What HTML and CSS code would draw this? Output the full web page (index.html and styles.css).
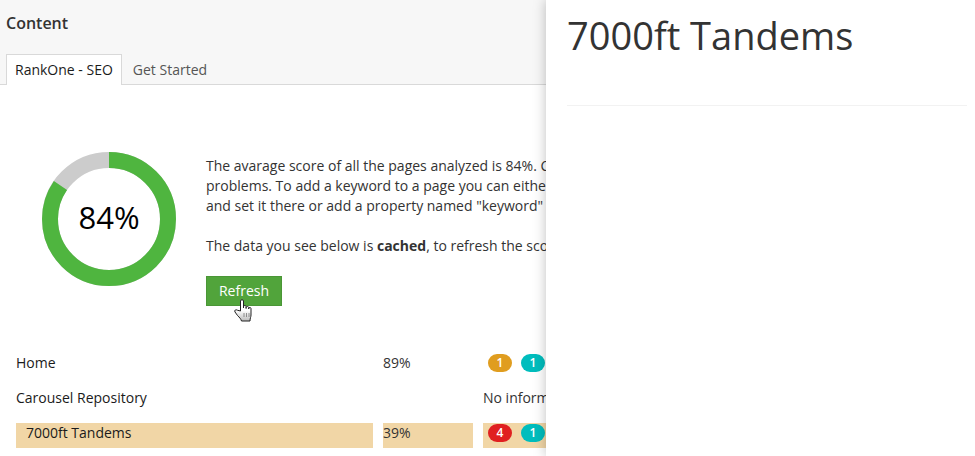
FILE: index.html
```html
<!DOCTYPE html>
<html lang="en">
<head>
  <meta charset="UTF-8" />
  <title>RankOne - SEO</title>
  <link rel="stylesheet" href="styles.css">
</head>
<body>
  <div class="main">
    <div class="main-header">
      <div class="main-title">Content</div>
      <div class="tabs">
        <div class="tab active">RankOne - SEO</div>
        <div class="tab">Get Started</div>
      </div>
    </div>
    <div class="summary">
      <div class="donut">
        <svg width="134" height="134" viewBox="0 0 134 134">
          <circle cx="67" cy="67" r="59" fill="none" stroke="#ccc" stroke-width="16"/>
          <circle cx="67" cy="67" r="59" fill="none" stroke="#4fb53f" stroke-width="16" stroke-dasharray="313.2 370.7" transform="rotate(-90 67 67)"/>
        </svg>
        <span class="donut-label">84%</span>
      </div>
      <div class="summary-text">
        <p>The avarage score of all the pages analyzed is 84%. Check the list below to find pages with<br>problems. To add a keyword to a page you can either open the page in the content section<br>and set it there or add a property named "keyword" to the document type.</p>
        <p>The data you see below is <b>cached</b>, to refresh the score press the button below.</p>
        <div class="refresh-wrap">
          <button class="btn-refresh">Refresh</button>
          <svg class="cursor" width="20" height="23" viewBox="0 0 20 23">
            <defs>
              <linearGradient id="hand-fill" x1="0" y1="0" x2="0" y2="1">
                <stop offset="0.5" stop-color="#fff"/>
                <stop offset="1" stop-color="#bbb"/>
              </linearGradient>
            </defs>
            <path d="M6.500 12V2c0-1.700 3-1.700 3 0v7V7.500c0-1.300 2.600-1.300 2.600 0v2-1c0-1.300 2.600-1.300 2.600 0v1.500-.5c0-1.300 2.300-1.300 2.300 0V16c0 2-1 3-1 6H7.500c-.5-2-2-3.500-4-5.500L1 13c-1-1.500.8-3 2.300-1.800z" fill="url(#hand-fill)" stroke="#222" stroke-width="1"/>
            <path d="M10 14v4M12.500 14v4M15 14v4" fill="none" stroke="#777" stroke-width="0.8"/>
          </svg>
        </div>
      </div>
    </div>
    <div class="pages">
      <div class="page-name">Home</div>
      <div class="page-score">89%</div>
      <div class="page-info">
        <span class="badge orange">1</span>
        <span class="badge teal">1</span>
      </div>
      <div class="page-name">Carousel Repository</div>
      <div class="page-score"></div>
      <div class="page-info">No information available</div>
      <div class="page-name low">7000ft Tandems</div>
      <div class="page-score low">39%</div>
      <div class="page-info low">
        <span class="badge red">4</span>
        <span class="badge teal">1</span>
      </div>
    </div>
  </div>
  <div class="panel">
    <h1>7000ft Tandems</h1>
    <hr>
  </div>
</body>
</html>
```
FILE: styles.css
```css
html, body {
  height: 100%;
}
body {
  margin: 0;
  display: flex;
  overflow: hidden;
  font-family: 'Open Sans', sans-serif;
  font-size: 14px;
  line-height: 20px;
  color: #333;
  background-color: #fff;
}
.main {
  width: 546px;
  flex-shrink: 0;
  overflow: hidden;
}
.main-header {
  height: 84px;
  background-color: #f7f7f7;
  border-bottom: 1px solid #d9d9d9;
  display: flex;
  flex-direction: column;
  justify-content: space-between;
  padding: 0 6px;
}
.main-title {
  font-size: 16px;
  font-weight: 600;
  margin-top: 13px;
}
.tabs {
  display: flex;
  margin-bottom: -1px;
}
.tab {
  height: 30px;
  padding: 0 10px;
  line-height: 30px;
  color: #555;
  white-space: nowrap;
  border: 1px solid transparent;
  border-bottom: 0;
}
.tab.active {
  padding: 0 8px;
  color: #1b1b1b;
  background-color: #fff;
  border-color: #d9d9d9;
}
.summary {
  display: flex;
  margin-top: 67px;
  padding-left: 42px;
}
.donut {
  width: 134px;
  height: 134px;
  position: relative;
  flex-shrink: 0;
}
.donut svg {
  display: block;
}
.donut-label {
  position: absolute;
  inset: 0;
  padding-bottom: 5px;
  display: flex;
  align-items: center;
  justify-content: center;
  font-size: 31px;
  color: #000;
}
.summary-text {
  margin-left: 30px;
  white-space: nowrap;
  margin-top: 4px;
}
.summary-text p {
  margin: 0 0 20px;
}
.refresh-wrap {
  position: relative;
  width: 76px;
}
.btn-refresh {
  display: block;
  width: 76px;
  height: 30px;
  padding: 0 0 2px;
  font-family: inherit;
  font-size: 14px;
  color: #fff;
  background-color: #51a43b;
  border: 1px solid #4a9636;
}
.cursor {
  position: absolute;
  left: 28px;
  top: 23px;
}
.pages {
  display: grid;
  grid-template-columns: 357px 90px 1fr;
  grid-auto-rows: 25px;
  column-gap: 10px;
  row-gap: 10px;
  margin-top: 47px;
  padding-left: 16px;
  white-space: nowrap;
}
.page-name {
  color: #1b1b1b;
}
.page-name.low {
  padding-left: 10px;
}
.low {
  background-color: #f1d6a6;
}
.page-info:has(.badge) {
  display: flex;
  gap: 9px;
  padding-left: 5px;
  padding-top: 1px;
  align-items: flex-start;
}
.badge {
  width: 24px;
  height: 18px;
  flex-shrink: 0;
  border-radius: 9px;
  font-size: 12px;
  font-weight: 600;
  line-height: 18px;
  text-align: center;
  color: #fff;
}
.orange {
  background-color: #e09d1f;
}
.teal {
  background-color: #00bdbd;
}
.red {
  background-color: #e02020;
}
.panel {
  flex-grow: 1;
  position: relative;
  padding: 0 8px 0 21px;
  background-color: #fff;
  box-shadow: 0 0 12px rgba(0, 0, 0, 0.25);
}
.panel h1 {
  margin: 11px 0 0;
  font-size: 38px;
  font-weight: 400;
  line-height: 48px;
  color: #333;
}
.panel hr {
  margin: 46px 0 0;
  border: 0;
  border-top: 1px solid #f2f2f2;
}
```
